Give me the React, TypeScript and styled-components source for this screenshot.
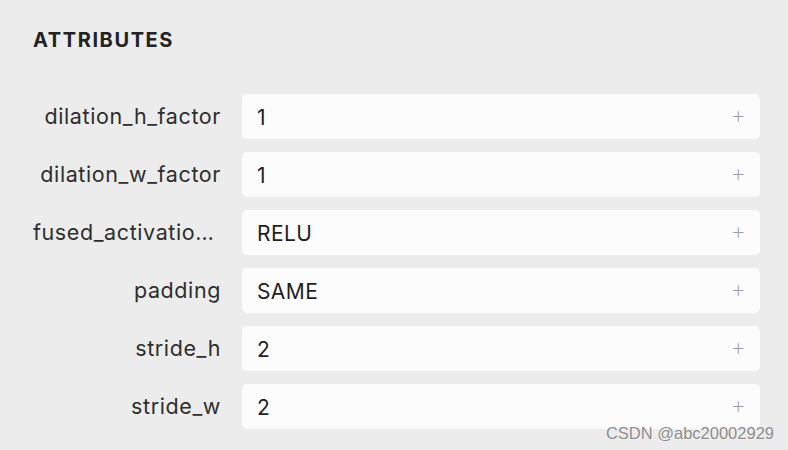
import styled, { createGlobalStyle } from "styled-components";

const GlobalStyle = createGlobalStyle`
  html, body {
    margin: 0;
    padding: 0;
    background: #ececec;
  }
  body {
    font-family: Inter, "Noto Sans", sans-serif;
    color: #262626;
  }
`;

const attributes = [
  { name: "dilation_h_factor", value: "1" },
  { name: "dilation_w_factor", value: "1" },
  { name: "fused_activation_function", value: "RELU" },
  { name: "padding", value: "SAME" },
  { name: "stride_h", value: "2" },
  { name: "stride_w", value: "2" },
];

export default function App() {
  return (
    <>
      <GlobalStyle />
      <Page>
        <Title>ATTRIBUTES</Title>
        <List>
          {attributes.map((a) => (
            <Row key={a.name}>
              <Label>{a.name}</Label>
              <Field>
                <Value>{a.value}</Value>
                <Plus>+</Plus>
              </Field>
            </Row>
          ))}
        </List>
        <Watermark>CSDN @abc20002929</Watermark>
      </Page>
    </>
  );
}

const Page = styled.div`
  position: relative;
  width: 788px;
  height: 450px;
  box-sizing: border-box;
  padding: 28px 28px 0 33px;
  background: #ececec;
  overflow: hidden;
`;

const Title = styled.div`
  font-size: 20px;
  font-weight: 700;
  letter-spacing: 1.6px;
  color: #232323;
  line-height: 24px;
`;

const List = styled.div`
  display: flex;
  flex-direction: column;
  gap: 13px;
  margin-top: 42px;
`;

const Row = styled.div`
  display: flex;
  align-items: center;
  gap: 21px;
`;

const Label = styled.div`
  width: 188px;
  text-align: right;
  font-size: 21.5px;
  letter-spacing: 0.6px;
  color: #2e2e2e;
  white-space: nowrap;
  overflow: hidden;
  text-overflow: ellipsis;
  padding-bottom: 2px;
`;

const Field = styled.div`
  flex: 1;
  height: 45px;
  display: flex;
  align-items: center;
  justify-content: space-between;
  padding: 0 14px 0 15px;
  background: #fcfcfc;
  border-radius: 5px;
`;

const Value = styled.span`
  font-size: 21px;
  letter-spacing: 0.4px;
  color: #1f1f1f;
  padding-top: 2px;
`;

const Plus = styled.span`
  font-size: 24px;
  font-weight: 200;
  line-height: 1;
  color: #a0a0a0;
  padding-bottom: 4px;
`;

const Watermark = styled.div`
  position: absolute;
  right: 14px;
  bottom: 7px;
  font-family: "Liberation Sans", Arial, sans-serif;
  font-size: 16.5px;
  color: #8c8c8c;
  text-shadow: 0 0 2px rgba(255, 255, 255, 0.8);
`;
